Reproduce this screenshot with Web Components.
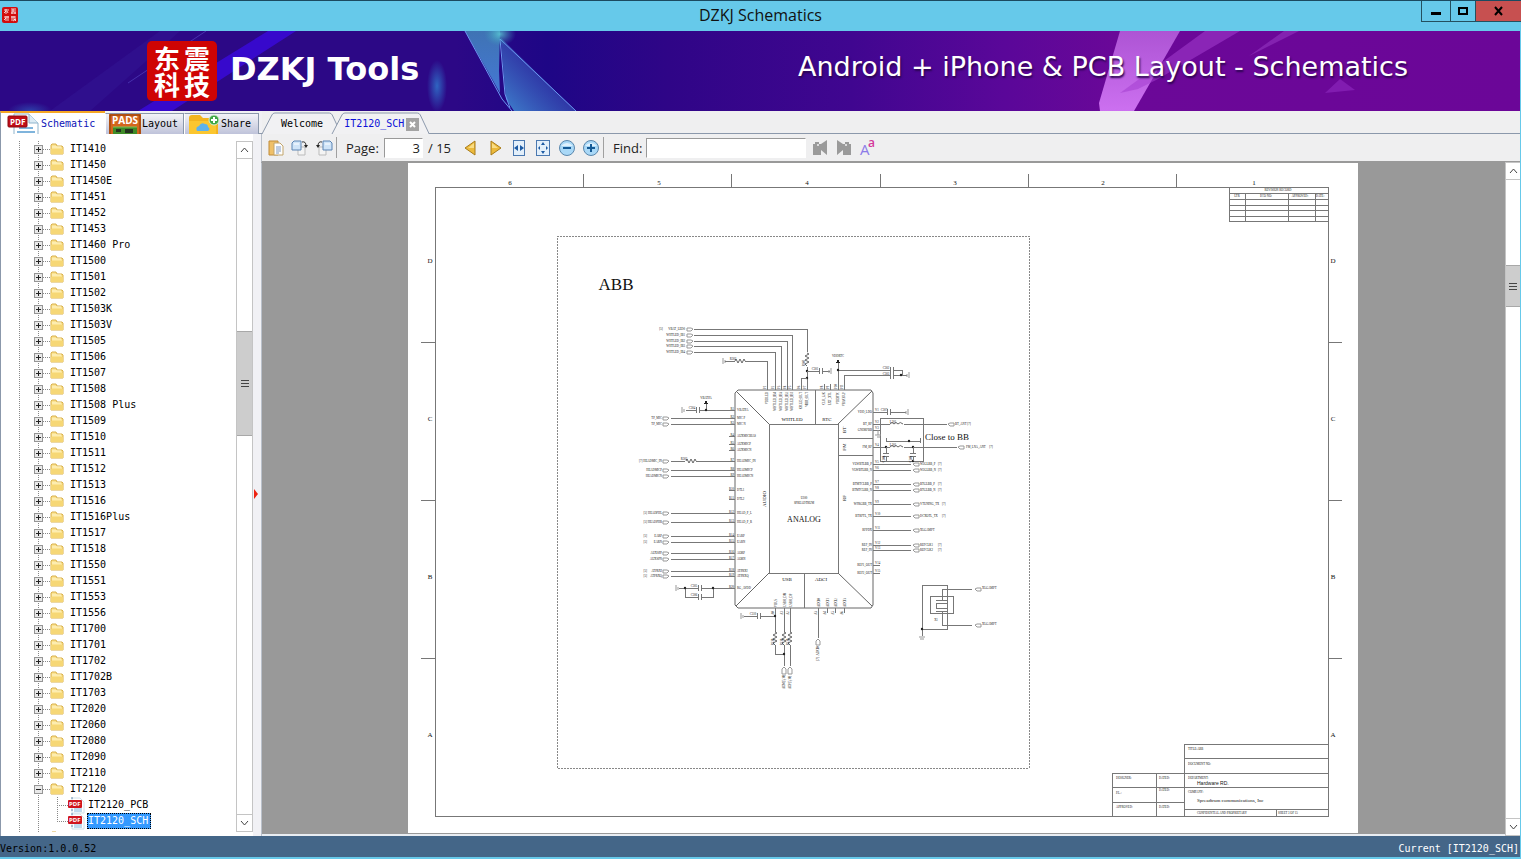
<!DOCTYPE html>
<html lang="en">
<head>
<meta charset="utf-8">
<title>DZKJ Schematics</title>
<style>
html, body { margin: 0; height: 100%; }
body { font: 13px/18px "Open Sans", "Noto Sans", sans-serif; color: #111; background: #66c9ea; }
</style>
</head>
<body>
<dz-app></dz-app>
<script>
const define = (name, html, setup) => customElements.define(name, class extends HTMLElement {
  constructor() {
    super();
    const t = document.createElement('template');
    t.innerHTML = html;
    this.attachShadow({ mode: 'open' }).append(t.content.cloneNode(true));
  }
  connectedCallback() { if (setup) setup(this, this.shadowRoot); }
});

/* ---------- icons ---------- */
const pageCorner = '<path d="M10 0h15l9 9v12H10z" fill="#fff" stroke="#8fb4cc"/><path d="M25 0v9h9" fill="#dcebf4" stroke="#8fb4cc"/><path d="M15 14h14M13 18h18" stroke="#7fb4dc" stroke-width="2"/>';
const sheetBack = 'fill="#f4f4f4" stroke="#bbb"';
const ICONS = {
  logo: [16, 16, '<rect width="16" height="16" rx="2" fill="#d30d0d"/><path d="M2 3h5M4 2v5M2 6l2-2M6 6L5 4M9 2h5M9 4h5M10 5v2M13 5v2M9 6h5M11 2v3M2 10h5M4 9v5M2 13l2-2M6 9v5M9 10h2M10 9v5M11 10h3M12 9v2M11 12h3l-3 2M12 12l2 2" stroke="#fff" fill="none" stroke-width=".8"/>'],
  pdfBig: [32, 22, '<g transform="translate(-3 1)">' + pageCorner + '</g><rect x="1" y="3" width="19" height="11" rx="1" fill="#c00d16" stroke="#8c0a10"/><text x="3" y="12" font-family="Open Sans" font-size="8" font-weight="700" fill="#fff">PDF</text>'],
  pdf: [16, 16, '<path d="M4 1h8l4 4v11H4z" fill="#fff" stroke="#cfe0ea"/><path d="M6 12h8M6 14h8" stroke="#7fb4dc"/><path d="M4 0v16" stroke="#6688aa" stroke-dasharray="2 2"/><rect x="0" y="3" width="14" height="8" rx="1" fill="#d0141d"/><text x="1" y="9" font-family="Open Sans" font-size="6" font-weight="700" fill="#fff">PDF</text>'],
  pads: [32, 20, '<rect width="32" height="20" fill="#d4651c"/><path d="M1 20V1h30v19" fill="none" stroke="#8a3d0b"/><text x="3" y="10" font-family="Open Sans" font-size="10" font-weight="700" fill="#fff">PADS</text><path d="M4 13h24v7H4z" fill="#3f8c28"/><path d="M7 15h5v3H7zM16 15h8v4h-8z" fill="#24331f"/><path d="M4 13h24" stroke="#84c35c"/>'],
  cloud: [32, 20, '<path d="M1 20V4q0-3 3-3h8l3 3h12q3 0 3 3v13z" fill="#f3b41f"/><path d="M1 20V7h27v13z" fill="#fbc62f"/><path d="M9 17q-2-4 2-5 2-4 6-2 3 0 3 3 3 2 0 4z" fill="#5eb2ec"/><circle cx="26" cy="6" r="5" fill="#3fa744" stroke="#d6efd2"/><path d="M26 3v6M23 6h6" stroke="#fff" stroke-width="2"/>'],
  folder: [14, 12, '<path d="M1 11V2l1-1h4l1 2h5l1 1v7z" fill="#fbe391" stroke="#d9b04a"/><path d="M1 6h12v5H1z" fill="#f6d775"/><path d="M2 4h9" stroke="#fff6cf"/>'],
  book: [16, 18, '<path d="M1 2h9v14H1z" fill="#efc068" stroke="#c08b38"/><path d="M6 4h6l3 3v9H6z" fill="#fdfdfd" stroke="#c2a56b"/><path d="M8 8h5M8 10h5M8 12h5M8 14h3" stroke="#7e9bc4"/>'],
  rotR: [18, 18, '<path d="M7 8h7v8H7z" ' + sheetBack + '/><path d="M3 2h7v9H1V4z" fill="#cfe4f8" stroke="#5c85b4"/><path d="M3 5h5" stroke="#fff"/><path d="M11 3q4-1 4 4" fill="none" stroke="#333"/><path d="M13 6h4l-2 3z" fill="#222"/>'],
  rotL: [18, 18, '<path d="M4 8h7v8H4z" ' + sheetBack + '/><path d="M8 2h7l2 2v7H8z" fill="#cfe4f8" stroke="#5c85b4"/><path d="M10 5h5" stroke="#fff"/><path d="M7 3q-4-1-4 4" fill="none" stroke="#333"/><path d="M1 6h4L3 9z" fill="#222"/>'],
  prev: [14, 18, '<path d="M11 2v14L1 9z" fill="#ecba3c" stroke="#a87c1c"/><path d="M10 4v5H4z" fill="#f9dd85"/>'],
  next: [14, 18, '<path d="M3 2v14l10-7z" fill="#ecba3c" stroke="#a87c1c"/><path d="M4 4v5h6z" fill="#f9dd85"/>'],
  fitW: [14, 18, '<rect x="1.500" y="1.500" width="11" height="15" fill="#e3effa" stroke="#4a78b0"/><path d="M2 9l4-3v6zM12 9L8 6v6z" fill="#1d5ba4"/>'],
  fitP: [14, 18, '<rect x=".5" y="1.500" width="13" height="15" fill="#e3effa" stroke="#4a78b0"/><path d="M7 3l2 3H5zM7 15l2-3H5zM2 9l2-2v4zM12 9l-2-2v4z" fill="#1d5ba4"/>'],
  minus: [18, 18, '<circle cx="9" cy="9" r="7.500" fill="#a9d8f7" stroke="#5a87ad"/><path d="M3 7q6-6 12 0z" fill="#dff1fd"/><path d="M5 9h8" stroke="#155a96" stroke-width="2"/>'],
  plus: [18, 18, '<circle cx="9" cy="9" r="7.500" fill="#a9d8f7" stroke="#5a87ad"/><path d="M3 7q6-6 12 0z" fill="#dff1fd"/><path d="M5 9h8M9 5v8" stroke="#155a96" stroke-width="2"/>'],
  findPrev: [18, 18, '<path d="M2 5h2V3h4v2h2l6-4v15l-6-5v5H2z" fill="#9a9a9a"/><circle cx="7" cy="6" r="1" fill="#efeff0"/>'],
  findNext: [18, 18, '<path d="M16 5h-2V3h-4v2H8L2 1v15l6-5v5h8z" fill="#9a9a9a"/><circle cx="11" cy="6" r="1" fill="#efeff0"/>'],
  matchCase: [18, 18, '<text x="1" y="16" font-family="Open Sans" font-size="15" fill="#8c7be8">A</text><text x="9" y="8" font-family="Open Sans" font-size="12" font-weight="600" fill="#d4379a">a</text>'],
  up: [9, 6, '<path d="M1 5l3.500-4L8 5" fill="none" stroke="#444"/>'],
  down: [9, 6, '<path d="M1 1l3.500 4L8 1" fill="none" stroke="#444"/>'],
  min: [12, 10, '<path d="M1 6h10v3H1z" fill="#000"/>'],
  max: [12, 10, '<path d="M2 2h8v6H2z" fill="none" stroke="#000" stroke-width="2"/>'],
  close: [12, 10, '<path d="M2 1l7 8M9 1L2 9" stroke="#000" stroke-width="2"/>'],
  tabClose: [13, 13, '<rect width="13" height="13" fill="#a3a3a3"/><path d="M4 4l5 5M9 4L4 9" stroke="#fff" stroke-width="2"/>']
};
define('dz-icon', '<style>:host{display:block;flex:none}svg{display:block;overflow:visible}</style>', (el, root) => {
  const icon = ICONS[el.getAttribute('name')];
  if (!icon || root.querySelector('svg')) return;
  const [w, h, body] = icon;
  root.innerHTML += `<svg width="${w}" height="${h}" viewBox="0 0 ${w} ${h}" aria-hidden="true">${body}</svg>`;
});

/* ---------- title bar ---------- */
define('dz-titlebar', `
<style>
:host{display:grid;grid-template-columns:1fr auto 1fr;height:30px;border-top:1px solid #1b4a60;background:#66c9ea}
dz-icon{margin:6px 2px;width:16px}
h1{margin:0;font:16px/28px "Open Sans","Noto Sans",sans-serif;color:#111}
nav{display:flex;justify-self:end;height:20px;border-left:1px solid #24505f;border-bottom:1px solid #24505f}
button{border:0;padding:0;margin:0;background:none;width:28px;display:grid;place-items:center}
button dz-icon{margin:0;width:12px}
.max{width:26px;border-left:1px solid #24505f;border-right:1px solid #24505f}
.close{background:#c75050;width:45px}
</style>
<dz-icon name="logo"></dz-icon>
<h1><slot></slot></h1>
<nav><button aria-label="Minimize"><dz-icon name="min"></dz-icon></button><button class="max" aria-label="Maximize"><dz-icon name="max"></dz-icon></button><button class="close" aria-label="Close"><dz-icon name="close"></dz-icon></button></nav>
`);

/* ---------- banner ---------- */
define('dz-banner', `
<style>
:host{display:flex;position:relative;height:80px;align-items:center;overflow:hidden;color:#fff;
 background:linear-gradient(90deg,#2c0886 0,#2c0886 30%,#1e0686 36%,#2f0587 44%,#400690 56%,#5a0799 66%,#6b0898 74%,#6b0698 100%)}
.art{position:absolute;inset:0;width:100%;height:100%}
.seal{position:relative;margin-left:147px;width:70px;height:60px;border-radius:5px;background:#cf0404;display:grid;grid-template-columns:27px 27px;grid-template-rows:26px 26px;place-content:center;justify-items:center;column-gap:3px;font:700 26px/26px "Noto Sans CJK SC",sans-serif;flex:none}
.name{position:relative;margin-left:13px;font:700 32px/40px "DejaVu Sans",sans-serif;white-space:nowrap;padding-bottom:4px}
.tag{position:relative;margin-left:auto;margin-right:112px;font:27px/40px "DejaVu Sans",sans-serif;white-space:nowrap;text-shadow:1px 2px 2px #2a0550;padding-bottom:8px}
</style>
<svg class="art" viewBox="0 0 1520 80" preserveAspectRatio="none" aria-hidden="true">
<defs>
<linearGradient id="a" x1="0" y1="0" x2="0" y2="1"><stop offset="0" stop-color="#3f73b4"/><stop offset="1" stop-color="#4478d4"/></linearGradient>
<linearGradient id="b" x1="1" y1="0" x2="0" y2="1"><stop offset="0" stop-color="#2f1fa0" stop-opacity=".3"/><stop offset="1" stop-color="#3f86d0"/></linearGradient>
<linearGradient id="c" x1="0" y1="0" x2="0" y2="1"><stop offset="0" stop-color="#ad54d4"/><stop offset="1" stop-color="#cc70f0"/></linearGradient>
<radialGradient id="d"><stop offset="0" stop-color="#2f6fc8" stop-opacity=".9"/><stop offset="1" stop-color="#2f6fc8" stop-opacity="0"/></radialGradient>
<radialGradient id="e"><stop offset="0" stop-color="#5cd0d8" stop-opacity=".8"/><stop offset="1" stop-color="#3aa0b8" stop-opacity="0"/></radialGradient>
</defs>
<path d="M268 0h28L172 80h-34z" fill="#3a09d8" opacity=".85"/>
<path d="M160 0h20L90 80H50z" fill="#3a2da8" opacity=".2"/>
<path d="M206 0L128 52" stroke="#5a4cc8" opacity=".6"/>
<path d="M465 0h35l-1 40 1 22z" fill="url(#a)"/>
<path d="M500 0v6l76 74h-62l-8-12z" fill="url(#b)"/>
<path d="M465 0l37 68 10 12M500 8l76 72M500 8l5 55 5 14" stroke="#6a98f0" fill="none"/>
<ellipse cx="437" cy="55" rx="10" ry="26" fill="url(#d)"/>
<ellipse cx="500" cy="3" rx="16" ry="12" fill="url(#e)"/>
<ellipse cx="30" cy="80" rx="22" ry="9" fill="url(#d)" opacity=".6"/>
<path d="M1120 0h60l-46 80h-34l-1-8z" fill="url(#c)"/>
<path d="M1205 0h35l-82 48-20 10-18 4z" fill="#a43ed0" opacity=".55"/>
<path d="M1284 0h15l-50 25z" fill="#9335c0" opacity=".6"/>
<path d="M1340 48l15 11-30 3z" fill="#8f2cc0" opacity=".6"/>
</svg>
<div class="seal" lang="zh"><span>东</span><span>震</span><span>科</span><span>技</span></div>
<div class="name">DZKJ Tools</div>
<div class="tag">Android + iPhone &amp; PCB Layout - Schematics</div>
`);

/* ---------- scrollbar ---------- */
define('dz-scrollbar', `
<style>
:host{display:grid;box-sizing:border-box;grid-template-rows:17px var(--before) var(--thumb) var(--after) 17px;background:#fff;border:1px solid #c4c4c4}
button{border:0;padding:0;background:#fff;display:grid;place-items:center;min-width:0}
.up{border-bottom:1px solid #c4c4c4}.down{border-top:1px solid #c4c4c4}
.thumb{background:#cdcdcd;border:solid #a8a8a8;border-width:1px 0;display:grid;place-items:center}
.thumb i{width:8px;height:7px;background:repeating-linear-gradient(#444 0 1px,transparent 1px 3px)}
</style>
<button class="up" aria-label="Scroll up"><dz-icon name="up"></dz-icon></button><span></span>
<div class="thumb"><i></i></div><span></span>
<button class="down" aria-label="Scroll down"><dz-icon name="down"></dz-icon></button>
`);

/* ---------- side tabs and tree ---------- */
define('dz-side-tab', `
<style>
:host{display:block}
button{box-sizing:border-box;height:21px;width:100%;display:flex;align-items:center;gap:1px;padding:0 3px;border:1px solid #8b98ab;border-left-color:#fff;border-bottom:0;background:linear-gradient(#f3f3f8,#d9dbe8 50%,#bfc3da);font:10px/20px "DejaVu Sans Mono",monospace;color:#000;white-space:nowrap;overflow:hidden}
:host([active]) button{height:23px;background:#fff;color:#0c12b8;border:0;border-top:2px solid #f5a623;border-left:1px solid #8b98ab;padding-left:6px;gap:2px}
</style>
<button role="tab"><slot name="icon"></slot><slot></slot></button>
`);
define('dz-tree-row', `
<style>
:host{display:flex;align-items:center;height:16px;padding-left:33px;font:10px/16px "DejaVu Sans Mono",monospace;color:#000;white-space:pre}
button{box-sizing:border-box;width:9px;height:9px;padding:0;border:1px solid #959595;background:linear-gradient(#222,#222) center/5px 1px no-repeat,linear-gradient(#222,#222) center/1px 5px no-repeat,#e9e9e9}
:host([open]) button{background:linear-gradient(#222,#222) center/5px 1px no-repeat,#e9e9e9}
i{width:7px;border-top:1px dotted #888}
span{margin-left:5px;line-height:14px;border:1px solid transparent}
.leaf{display:none}
:host([leaf]){padding-left:56px}
:host([leaf]) button,:host([leaf]) .folder{display:none}
:host([leaf]) .leaf{display:block}
:host([leaf]) i{width:11px}
:host([leaf]) span{margin-left:3px;padding-right:2px}
:host([selected]) span{background:#3399ff;color:#fff;border:1px dotted #000}
</style>
<button aria-label="Toggle"></button><i></i><dz-icon class="folder" name="folder"></dz-icon><dz-icon class="leaf" name="pdf"></dz-icon><span><slot></slot></span>
`);
const MODELS = ['1410','1450','1450E','1451','1452','1453','1460 Pro','1500','1501','1502','1503K','1503V','1505','1506','1507','1508','1508 Plus','1509','1510','1511','1512','1513','1516','1516Plus','1517','1518','1550','1551','1553','1556','1700','1701','1702','1702B','1703','2020','2060','2080','2090','2110'];
define('dz-sidebar', `
<style>
:host{display:flex;flex-direction:column;width:262px;background:#f1f1f4;flex:none;min-height:0}
.tabs{display:grid;grid-template-columns:105px 79px 75px;align-items:end;height:23px;background:linear-gradient(#8b98ab,#8b98ab) bottom/100% 1px no-repeat}
.body{flex:1;min-height:0;display:grid;grid-template-columns:1fr 17px 9px;background:#fff;border-left:1px solid #8b98ab}
.tree{margin:7px 0 4px;overflow:hidden;min-height:0;contain:size;
 background:repeating-linear-gradient(#888 0 1px,transparent 1px 2px) 18px 0/1px 100% no-repeat,repeating-linear-gradient(#888 0 1px,transparent 1px 2px) 37px 0/1px 100% no-repeat}
.kids{background:repeating-linear-gradient(#888 0 1px,transparent 1px 2px) 56px 0/1px 25px no-repeat}
dz-scrollbar{margin:7px 0 4px;--before:173fr;--thumb:105fr;--after:379fr}
.split{display:grid;align-content:center;padding-top:18px;background:#f1f1f5;border-right:1px solid #b9c0ca}
.split svg{display:block}
</style>
<div class="tabs" role="tablist">
<dz-side-tab active><dz-icon slot="icon" name="pdfBig"></dz-icon>Schematic</dz-side-tab>
<dz-side-tab><dz-icon slot="icon" name="pads"></dz-icon>Layout</dz-side-tab>
<dz-side-tab><dz-icon slot="icon" name="cloud"></dz-icon>Share</dz-side-tab>
</div>
<div class="body"><div class="tree" role="tree"></div><dz-scrollbar></dz-scrollbar>
<div class="split"><svg width="6" height="10" viewBox="0 0 6 10"><path d="M1 0l4 5-4 5z" fill="#e21"/></svg></div></div>
`, (el, root) => {
  root.querySelector('.tree').innerHTML = MODELS.map(m => `<dz-tree-row role="treeitem">IT${m}</dz-tree-row>`).join('') +
    '<dz-tree-row role="treeitem" open>IT2120</dz-tree-row><div class="kids" role="group"><dz-tree-row role="treeitem" leaf>IT2120_PCB</dz-tree-row><dz-tree-row role="treeitem" leaf selected>IT2120_SCH</dz-tree-row></div><dz-tree-row role="treeitem"></dz-tree-row>';
});

/* ---------- document tabs ---------- */
define('dz-doc-tab', `
<style>
:host{display:block;position:relative;height:23px;margin-right:-9px}
:host([active]){z-index:1;margin:0}
svg.edge{position:absolute;left:0;top:0;width:100%;height:23px;overflow:visible}
button{box-sizing:border-box;position:relative;border:0;background:none;height:23px;padding:3px 18px 0 19px;display:flex;gap:2px;align-items:center;font:10px/20px "DejaVu Sans Mono",monospace;color:#000}
:host([active]) button{color:#0c12d8;padding:3px 10px 0 12px}
</style>
<svg class="edge" aria-hidden="true"></svg><button role="tab"><slot></slot></button>
`, (el, root) => {
  const w = el.hasAttribute('active') ? 98 : 80;
  const edge = root.querySelector('svg');
  edge.setAttribute('viewBox', `0 0 ${w} 23`);
  edge.setAttribute('preserveAspectRatio', 'none');
  edge.innerHTML = `<path d="M0 23L10 4q1-2 3-2H${w - 12}q2 0 3 2L${w} 23" fill="#f1f1f3" stroke="#8b98ab"/>`;
});

/* ---------- toolbar ---------- */
define('dz-tool', `
<style>:host{display:block;flex:none}button{width:24px;height:24px;padding:0;border:0;background:none;display:grid;place-items:center}</style>
<button></button>
`, (el, root) => {
  const button = root.querySelector('button');
  button.setAttribute('aria-label', el.getAttribute('label'));
  button.innerHTML = `<dz-icon name="${el.getAttribute('icon')}"></dz-icon>`;
});
define('dz-toolbar', `
<style>
:host{display:flex;align-items:center;height:27px;padding-left:2px;background:#efeff0;border-bottom:2px solid #999;border-left:1px solid #b9c0ca;margin-left:-1px;font:13px/20px "Open Sans","Noto Sans",sans-serif;color:#222}
hr{width:1px;height:21px;margin:0 9px 0 0;border:0;background:#a0a0a0}
label[for=page]{width:38px}label[for=find]{width:33px}
input{box-sizing:border-box;height:20px;border:1px solid #fff;border-top-color:#999;border-left-color:#999;background:#fff;padding:0 4px;font:inherit;color:#222;outline:0;min-width:0}
#page{width:39px;text-align:right;padding-right:2px}
#find{width:160px;margin-right:2px}
.total{width:31px;padding-left:5px;white-space:nowrap}
</style>
<dz-tool icon="book" label="Bookmarks"></dz-tool><dz-tool icon="rotR" label="Rotate right"></dz-tool><dz-tool icon="rotL" label="Rotate left"></dz-tool>
<hr><label for="page">Page:</label><input id="page" value="3"><span class="total">/ 15</span>
<dz-tool icon="prev" label="Previous page"></dz-tool><dz-tool icon="next" label="Next page"></dz-tool><dz-tool icon="fitW" label="Fit width"></dz-tool><dz-tool icon="fitP" label="Fit page"></dz-tool><dz-tool icon="minus" label="Zoom out"></dz-tool><dz-tool icon="plus" label="Zoom in"></dz-tool>
<hr><label for="find">Find:</label><input id="find"><dz-tool icon="findPrev" label="Find previous"></dz-tool><dz-tool icon="findNext" label="Find next"></dz-tool><dz-tool icon="matchCase" label="Match case"></dz-tool>
`);

/* ---------- schematic sheet ---------- */
function drawSheet() {
  const out = [];
  const line = (d, c) => out.push(`<path d="${d}"${c ? ` class="${c}"` : ''}/>`);
  const text = (x, y, s, size = 3, anchor = 'middle', rot = 0, extra = '') =>
    out.push(`<text x="${x}" y="${y}" font-size="${size}" text-anchor="${anchor}"${rot ? ` transform="rotate(${rot} ${x} ${y})"` : ''} ${extra}>${s}</text>`);
  const dot = (x, y) => out.push(`<circle cx="${x}" cy="${y}" r="1.200" class="f"/>`);
  const gndH = (x, y, dir = 1) => line(`M${x} ${y - 3}v6M${x + 2 * dir} ${y - 1}v3`, 'l');
  const zigH = (x, y) => line(`M${x} ${y}l1-2 2 4 2-4 2 4 2-4 1 2`, 's');
  const zigV = (x, y) => line(`M${x} ${y}l2 1-4 2 4 2-4 2 4 2-4 2 2 2`, 's');
  const capH = (x, y) => line(`M${x} ${y - 3}v6M${x + 3} ${y - 3}v6`);
  const port = (x, y) => line(`M${x} ${y - 1}h4l2 1-2 2h-4z`, 'l');
  const portR = (x, y) => line(`M${x} ${y}l2-1h4v3h-4z`, 'l');

  /* frame and zones */
  line('M435 187H1328V816H435z');
  [583, 731, 880, 1028, 1176].forEach(x => line(`M${x} 174v13`));
  [510, 659, 807, 955, 1103, 1254].forEach((x, i) => text(x, 185, 6 - i, 7));
  [342, 500, 658].forEach(y => line(`M421 ${y}h14M1328 ${y}h14`));
  ['D', 'C', 'B', 'A'].forEach((s, i) => { text(430, 263 + i * 158, s, 7); text(1333, 263 + i * 158, s, 7); });
  line('M557 236H1029V768H557z', 'dash');
  text(616, 290, 'ABB', 17);

  /* revision table */
  line('M1229 187v34h99M1229 193h99M1229 199h99M1229 205h99M1229 210h99M1229 216h99M1245 193v28M1288 193v28M1315 193v28');
  text(1278, 191, 'REVISION RECORD'); text(1237, 197, 'LTR'); text(1266, 197, 'ECO NO:'); text(1300, 197, 'APPROVED:'); text(1320, 197, 'DATE:');

  /* title block */
  line('M1184 816V744h144M1184 758h144M1112 773h216M1112 787h216M1112 802h72M1184 809h144M1112 773v43M1156 773v43M1276 809v7');
  [[1188, 750, 'TITLE:ABB'], [1188, 765, 'DOCUMENT NO:'], [1188, 779, 'DEPARTMENT:'], [1188, 793, 'COMPANY:'], [1197, 814, 'CONFIDENTIAL AND PROPRIETARY'], [1278, 814, 'SHEET 3 OF 15'],
   [1116, 779, 'DESIGNER:'], [1116, 794, 'P.L.:'], [1116, 808, 'APPROVED:'], [1159, 779, 'DATED:'], [1159, 791, 'DATED:'], [1159, 808, 'DATED:']].forEach(a => text(a[0], a[1], a[2], 3, 'start'));
  text(1197, 785, 'Hardware RD.', 5, 'start', 0, 'font-family="Liberation Sans"');
  text(1197, 802, 'Spreadtrum communications, Inc', 5, 'start');

  /* chip */
  line('M738 390H871L873 393V605L871 608H738L735 605V393z', 's');
  line('M769 424H838V573H769z');
  line('M736 391L769 424M838 424L872 391M769 573L736 606M838 573L872 606', 's');
  line('M815 390v34M804 573v35M838 438h35M838 455h35');
  text(792, 421, 'WHTLED', 5); text(827, 421, 'RTC', 5); text(787, 581, 'USB', 5); text(821, 581, 'ADCI', 5);
  text(846, 430, 'BT', 5, 'middle', -90); text(846, 447, 'FM', 5, 'middle', -90); text(846, 498, 'RF', 5, 'middle', -90); text(766, 499, 'AUDIO', 5, 'middle', -90);
  text(804, 522, 'ANALOG', 8); text(804, 499, 'U100'); text(804, 504, 'SPREADTRUM'); text(947, 440, 'Close to BB', 9);

  /* top nets */
  [[329, 807, 'VBAT_LED0'], [335, 792, 'WHTLED_IB1'], [341, 787, 'WHTLED_IB2'], [346, 781, 'WHTLED_IB3'], [352, 775, 'WHTLED_IB4']].forEach(([y, x, s], i) => {
    text(685, y + 1, s, 3, 'end'); port(687, y); line(i ? `M694 ${y}H${x}V390` : `M694 ${y}H${x}V352M807 367V390`);
  });
  text(661, 330, '[5]'); zigV(807, 353);
  text(805, 363, 'R301', 3, 'middle', -90);
  gndH(723, 361); line('M725 361h10M745 361h22V390'); zigH(735, 361); text(733, 360, 'R302');
  dot(807, 371); dot(807, 378); line('M807 371h12M822 371h8M807 378h-6v12'); capH(819, 371); gndH(831, 371, -1); text(815, 370, 'C301');
  [767, 775, 781, 787, 792, 801, 807, 824, 830, 838, 844].forEach((x, i) => {
    text(x + 1, 392, ['VDDLED', 'WHTLED_IB4', 'WHTLED_IB3', 'WHTLED_IB2', 'WHTLED_IB1', 'KPLED_OUT', 'VIBR_OUT', 'CLK_32K', 'EXT_XTL', 'VDDRTC', 'VBACKUP'][i], 3, 'end', -90);
    text(x - 1, 389, 'P' + (i + 1), 3, 'start', -90); line(`M${x} 384v6`);
  });
  line('M838 362v28M838 370h52M844 390V375h46M893 370h9v5M893 375h14'); capH(890, 370); capH(890, 376); dot(838, 370); dot(901, 375); gndH(909, 375, -1);
  line('M836 363l2-4 2 4z', 'f'); text(838, 357, 'VDDRTC'); text(886, 369, 'C302'); text(886, 375, 'C303');

  /* left pins */
  const LP = [[410,'VBATPA',0],[418,'MIC P','TP_MIC'],[424,'MIC N','TP_MIC'],[436,'AUXMICBIAS',0],[444,'AUXMICP',0],[450,'AUXMICN',0],[461,'HEADMIC_IN','[7] HEADMIC_IN'],[470,'HEADMICP','HEADMICP'],[476,'HEADMICN','HEADMICN'],[490,'DTL1',0],[499,'DTL2',0],[513,'HEAD_P_L','HEADPHL'],[522,'HEAD_P_R','HEADPHR'],[536,'EARP','EARP'],[542,'EARN','EARN'],[553,'AORP','AUXSPP'],[559,'AORN','AUXSPN'],[571,'ATPRXI','ATPRXI'],[576,'ATPRXQ','ATPRXQ'],[588,'RG_AVDD',0]];
  LP.forEach(([y, n, p], i) => {
    text(737, y + 1, n, 3, 'start'); text(734, y, 'R' + (i + 1), 3, 'end'); line(`M729 ${y}h6`);
    if (p) { text(662, y + 1, p, 3, 'end'); port(663, y); line(y === 461 ? 'M671 461h14M696 461h39' : `M671 ${y}h64`); }
    if (i > 10 && i < 19 && i !== 15 && i !== 16) text(647, y + 1, '[5]', 3, 'end');
  });
  zigH(686, 461); text(684, 460, 'R303');
  gndH(682, 410); line('M686 410h10M699 410h36M706 410v-8'); capH(696, 410); dot(706, 410); line('M704 404l2-4 2 4z', 'f'); text(706, 399, 'VBATPA'); text(692, 409, 'C304');
  gndH(676, 588); line('M679 588h19M701 588h34M685 588v9h13M701 597h12v-9'); capH(698, 588); capH(698, 597); dot(685, 588); dot(713, 588); text(694, 587, 'C305'); text(694, 596, 'C306');

  /* right pins */
  const RP = [[412,'VDD_LDO',0],[424,'BT_RF',0],[430,'GNDRFBB',0],[447,'FM_RF',0],[464,'VLWBTLBB_P','W2GLBB_P'],[470,'VLWBTLBB_N','W2GLBB_N'],[484,'BTMTCLBB_P','BTGLBB_P'],[490,'BTMTCLBB_N','BTGLBB_N'],[504,'WFRGBB_TX','VTUNING_TX'],[516,'BTRFTL_TX','DCXOTL_TX'],[530,'RFPDX','XLGAMPT'],[545,'REF_IN','REFCLK1'],[550,'REF_IN','REFCLK2'],[565,'REF1_OUT',0],[573,'REF2_OUT',0]];
  RP.forEach(([y, n, p], i) => {
    text(872, y + 1, n, 3, 'end'); text(875, y - 1, 'V' + (i + 1), 3, 'start'); line(`M873 ${y}h7`);
    if (p) { line(`M873 ${y}h38`); portR(913, y); text(920, y + 1, p, 3, 'start'); if (y !== 530) text(y > 500 && y < 520 ? 942 : 938, y + 1, '[7]', 3, 'start'); }
  });
  line('M880 418H923V461H880z');
  line('M880 412h7M890 412h16'); capH(887, 412); gndH(908, 412, -1); text(884, 411, 'C307');
  [424, 447].forEach(y => { line(`M880 ${y}h10M904 ${y}h${y === 424 ? 43 : 53}`); line(`M890 ${y}q2-3 4 0q2-3 4 0q2-3 5 0`, 's'); text(893, y - 1, 'L301'); });
  portR(948, 424); portR(958, 447); text(955, 425, 'BT_ANT', 3, 'start'); text(969, 425, '[7]'); text(966, 448, 'FM_LNA_ANT', 3, 'start'); text(991, 448, '[7]');
  line('M878 430v5M875 435h6M877 437h3', 'l'); line('M886 438v3h34M920 438v5'); dot(909, 441); dot(886, 447); dot(913, 447); dot(913, 461);
  line('M886 447v6M883 453h6M883 456h6M886 456v5M913 447v6M910 453h6M910 456h6M913 456v5'); text(885, 459, 'C308', 3, 'middle', -90); text(912, 459, 'C309', 3, 'middle', -90);

  /* bottom nets */
  [[775, 'VBUS'], [784, 'USBH_DM'], [790, 'USBH_DP'], [818, 'ADCI0'], [827, 'ADCI1'], [835, 'ADCI2'], [844, 'ADCI3']].forEach(([x, s], i) => {
    text(x + 2, 607, s, 3, 'start', -90); text(x - 1, 613, 'A' + i, 3, 'middle', -90); line(`M${x} 608v5`);
  });
  [775, 784, 790].forEach(x => { line(`M${x} 608v24`); zigV(x, 632); text(x - 1, 642, 'R310', 3, 'middle', -90); });
  line('M775 645v9h9M784 645v21M790 645v21M775 616h-14M757 616h-13M818 608v30'); capH(757, 616); gndH(741, 616); text(753, 615, 'C310'); dot(775, 616); dot(784, 654);
  [784, 790].forEach((x, i) => { line(`M${x - 2} 674v-5l2-2 2 2v5z`, 'l'); text(x + 1, 689, i ? 'ADP[5,10]' : 'ADM[5,10]', 3, 'start', -90); });
  line('M816 645v-4l2-2 2 2v4z', 'l'); text(819, 651, 'ADCI0', 3, 'middle', -90); text(819, 659, '[7]', 3, 'middle', -90);

  /* crystal */
  line('M922 636V585h25v44h-25M930 596h23v17h-23zM936 603h11v5h-11zM936 600h12M936 611h12M942 600V589h30M942 611v14h30');
  portR(975, 589); portR(975, 625); text(982, 589, 'XLGAMPT', 3, 'start'); text(982, 625, 'XLGAMPT', 3, 'start'); text(936, 621, 'X1'); dot(922, 629); line('M919 637h6M920 639h4', 'l');
  return out.join('');
}
define('dz-sheet', `
<style>
:host{display:block;flex:none;background:#fff}
svg{display:block;width:100%;height:auto;font-family:"Liberation Serif",serif}
path{fill:none;stroke:#777;shape-rendering:crispEdges}
.s{shape-rendering:auto;stroke:#666}
.l{shape-rendering:auto;stroke:#999}
.f{fill:#222;stroke:none}
.dash{stroke:#888;stroke-dasharray:2 1}
text{fill:#111}
</style>
<svg viewBox="408 163 950 670" role="img" aria-label="ABB schematic"></svg>
`, (el, root) => { root.querySelector('svg').innerHTML = drawSheet(); });

define('dz-viewer', `
<style>
:host{flex:1;min-width:0;min-height:0;display:flex;flex-direction:column;background:#efeff0}
.tabs{display:flex;height:23px;box-sizing:border-box;background:linear-gradient(#8b98ab,#8b98ab) bottom/100% 1px no-repeat}
.view{flex:1;min-height:0;display:grid;grid-template-columns:1fr 15px;background:#999;border-bottom:2px solid #e9edf2}
.canvas{display:flex;justify-content:center;align-items:flex-start;overflow:hidden;contain:size;padding-right:1px}
dz-sheet{width:950px}
dz-scrollbar{--before:86fr;--thumb:42fr;--after:514fr;margin:-1px 0 -2px;border-right:0}
</style>
<div class="tabs" role="tablist"><dz-doc-tab>Welcome</dz-doc-tab><dz-doc-tab active>IT2120_SCH<dz-icon name="tabClose"></dz-icon></dz-doc-tab></div>
<dz-toolbar></dz-toolbar>
<div class="view"><div class="canvas"><dz-sheet></dz-sheet></div><dz-scrollbar></dz-scrollbar></div>
`);

define('dz-statusbar', `
<style>:host{display:flex;justify-content:space-between;height:21px;box-sizing:border-box;padding:5px 1px 0 0;background:#446688;font:10px/16px "DejaVu Sans Mono",monospace;color:#000}
::slotted([slot=end]){color:#fff}</style>
<slot></slot><slot name="end"></slot>
`);

define('dz-app', `
<style>
:host{display:flex;flex-direction:column;height:100vh;box-sizing:border-box;border-bottom:2px solid #66c9ea}
.main{flex:1;min-height:0;display:flex}
dz-banner,.main,dz-statusbar{margin-right:1px}
</style>
<dz-titlebar>DZKJ Schematics</dz-titlebar>
<dz-banner></dz-banner>
<div class="main"><dz-sidebar></dz-sidebar><dz-viewer></dz-viewer></div>
<dz-statusbar><span>Version:1.0.0.52</span><span slot="end">Current [IT2120_SCH]</span></dz-statusbar>
`);
</script>
</body>
</html>
